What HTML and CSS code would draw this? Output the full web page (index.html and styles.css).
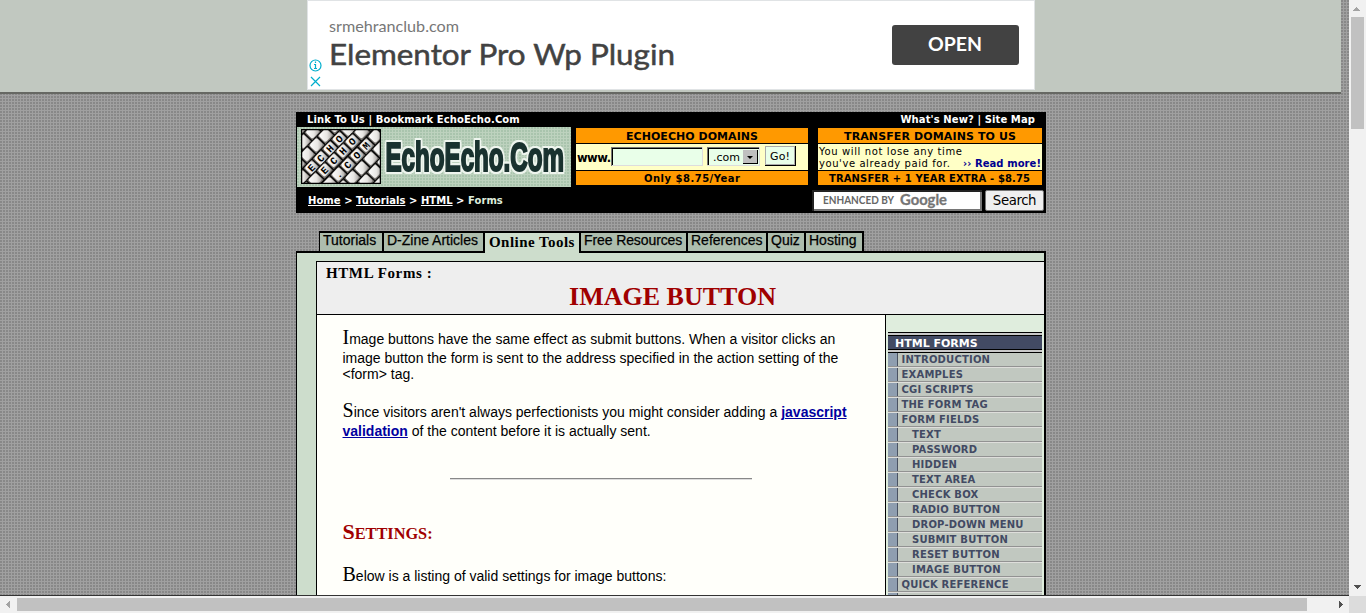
FILE: index.html
```html
<!DOCTYPE html>
<html lang="en">
<head>
<meta charset="utf-8">
<title>HTML Forms : Image Button</title>
<link rel="stylesheet" href="styles.css">
</head>
<body>
<div class="window">
<div class="page">
  <div class="adband">
    <svg class="ad" width="728" height="90" viewBox="0 0 728 90">
      <rect x=".5" y=".5" width="727" height="89" fill="#fff" stroke="#e0e3e5"/>
      <text class="adfont" x="22" y="32" font-size="15" fill="#777" textLength="130" lengthAdjust="spacingAndGlyphs">srmehranclub.com</text>
      <text class="adfont" x="22" y="65" font-size="29.500" fill="#424242" stroke="#424242" stroke-width=".5" textLength="346" lengthAdjust="spacingAndGlyphs">Elementor Pro Wp Plugin</text>
      <rect x="585" y="25" width="127" height="40" rx="3" fill="#424242"/>
      <text class="adfont" x="621" y="51" font-size="19.500" font-weight="700" fill="#fff" textLength="54" lengthAdjust="spacingAndGlyphs">OPEN</text>
      <g fill="none" stroke="#00aecd" stroke-width="1.2">
        <circle cx="8.5" cy="65.500" r="5.500"/>
        <path d="M7 64.500h1.500v4M7 68.500h3M8.500 61.500v1.500M4 77l9 9M13 77l-9 9"/>
      </g>
    </svg>
  </div>

  <div class="header">
    <div class="toplinks"><span class="tl">Link To Us | Bookmark EchoEcho.Com</span><span class="tr">What's New? | Site Map</span></div>
    <div class="banners">
      <svg class="logo" width="274" height="60" viewBox="0 0 274 60">
        <defs>
          <pattern id="mesh" width="3" height="3" patternUnits="userSpaceOnUse"><rect width="3" height="3" fill="#bdd2be"/><rect width="2" height="2" fill="#a9c4ad"/></pattern>
          <linearGradient id="tileFill" x1="0" y1="0" x2="1" y2="1"><stop offset="0" stop-color="#fff"/><stop offset=".6" stop-color="#e8e6e3"/><stop offset="1" stop-color="#a5a19f"/></linearGradient>
          <clipPath id="box"><rect width="80" height="55"/></clipPath>
          <g id="tile"><rect x="-6.500" y="-6.200" width="13" height="12.400" rx="1" fill="#77736f" stroke="#080808" stroke-width="1"/><rect x="-5" y="-5.300" width="10.400" height="9.800" rx="2" fill="url(#tileFill)"/></g>
          <g id="row"><use href="#tile" x="-66.500"/><use href="#tile" x="-53.200"/><use href="#tile" x="-39.900"/><use href="#tile" x="-26.600"/><use href="#tile" x="-13.300"/><use href="#tile"/><use href="#tile" x="13.300"/><use href="#tile" x="26.600"/><use href="#tile" x="39.900"/><use href="#tile" x="53.200"/><use href="#tile" x="66.500"/></g>
        </defs>
        <rect width="274" height="60" fill="url(#mesh)"/>
        <g transform="translate(4 2)" clip-path="url(#box)">
          <rect width="80" height="55" fill="#222"/>
          <g><use href="#row" transform="translate(-30 29) rotate(-46)"/><use href="#row" transform="translate(-16 32) rotate(-46)"/><use href="#row" transform="translate(-3 35.500) rotate(-46)"/><use href="#row" transform="translate(10.700 39) rotate(-46)"/><use href="#row" transform="translate(23.700 41.500) rotate(-46)"/><use href="#row" transform="translate(37.600 45.700) rotate(-46)"/><use href="#row" transform="translate(51.500 49) rotate(-46)"/><use href="#row" transform="translate(65 52.500) rotate(-46)"/><use href="#row" transform="translate(79 56) rotate(-46)"/></g>
          <g class="tiletext">
            <g transform="translate(10.700 39) rotate(-46)"><text x="0" y="3">E</text><text x="13.300" y="3">C</text><text x="26.600" y="3">H</text><text x="39.900" y="3">O</text></g>
            <g transform="translate(23.700 41.500) rotate(-46)"><text x="0" y="3">E</text><text x="13.300" y="3">C</text><text x="26.600" y="3">H</text><text x="39.900" y="3">O</text></g>
            <g transform="translate(37.600 45.700) rotate(-46)"><text x="0" y="3">.</text><text x="13.300" y="3">C</text><text x="26.600" y="3">O</text><text x="39.900" y="3">M</text></g>
          </g>
          <rect x=".5" y=".5" width="79" height="54" fill="none" stroke="#000" stroke-width="1.500"/>
        </g>
        <g class="wordmark" transform="translate(88.500 44) scale(.604 1)"><text>EchoEcho.Com</text></g>
      </svg>
      <svg class="domains" width="232" height="57" viewBox="0 0 232 57">
        <rect width="232" height="57" fill="#000"/>
        <path d="M0 0h232v15H0zM0 43h232v14H0z" fill="#ff9900"/><path d="M0 16h232v26H0z" fill="#ffffc6"/>
        <g class="vb"><text x="50" y="12" font-size="11" textLength="132">ECHOECHO DOMAINS</text><text x="68" y="54" font-size="10" textLength="96">Only $8.75/Year</text><text x="1" y="34" font-size="11.500" textLength="34">www.</text></g>
        <rect x="35" y="19" width="92" height="19" fill="#ddd"/><path d="M35 38V19h91v1H36v18z" fill="#777"/><rect x="36" y="20" width="90" height="17" fill="#000"/><rect x="37" y="21" width="89" height="16" fill="#e9ffe9"/>
        <rect x="131" y="19" width="53" height="19" fill="#ddd"/><path d="M131 37V19h52v18z" fill="#777"/><rect x="132" y="20" width="51" height="17"/><rect x="133" y="21" width="50" height="16" fill="#e9ffe9"/>
        <rect x="167" y="22" width="15" height="14" fill="#000"/><rect x="167" y="22" width="14" height="13" fill="#c0c0c0"/><path d="M171 28h6l-3 3z"/>
        <rect x="189" y="18" width="31" height="20"/><rect x="189" y="18" width="30" height="19" fill="#aaa"/><rect x="190" y="19" width="28" height="17" fill="#e9ffe9"/>
        <g class="v"><text x="137" y="33" font-size="11" textLength="27">.com</text><text x="194" y="32" font-size="11" textLength="20">Go!</text></g>
      </svg>
      <svg class="transfer" width="224" height="57" viewBox="0 0 224 57">
        <rect width="224" height="57" fill="#000"/>
        <path d="M0 0h224v15H0zM0 43h224v14H0z" fill="#ff9900"/><path d="M0 16h224v26H0z" fill="#ffffc6"/>
        <g class="vb"><text x="26" y="12" font-size="11" textLength="172">TRANSFER DOMAINS TO US</text><text x="11" y="54" font-size="10" textLength="201">TRANSFER + 1 YEAR EXTRA - $8.75</text><text x="145" y="39" font-size="10" textLength="78" fill="#000090">›› Read more!</text></g>
        <g class="v"><text x="1" y="27" font-size="10" textLength="143">You will not lose any time</text><text x="1" y="39" font-size="10" textLength="131">you've already paid for.</text></g>
      </svg>
    </div>
    <div class="crumbrow">
      <div class="crumbs"><u>Home</u> &gt; <u>Tutorials</u> &gt; <u>HTML</u> &gt; <span class="here">Forms</span></div>
      <div class="search">
        <svg class="field" width="170" height="21" viewBox="0 0 170 21"><rect width="170" height="21" fill="#767676"/><path d="M0 21V0h170v2H2v19z" fill="#222"/><rect x="2" y="2" width="166" height="17" fill="#fff"/><text class="adfont" x="11" y="14" font-size="10.500" fill="#666" textLength="71" lengthAdjust="spacingAndGlyphs">ENHANCED BY</text><text class="adfont" x="88" y="15" font-size="15.500" fill="#757575" stroke="#757575" stroke-width=".3" textLength="47" lengthAdjust="spacingAndGlyphs">Google</text></svg>
        <button class="go">Search</button>
      </div>
    </div>
  </div>

  <div class="tabs">
    <span class="tab t1">Tutorials</span><span class="tab t2">D-Zine Articles</span><span class="tab active">Online Tools</span><span class="tab t4">Free Resources</span><span class="tab t5">References</span><span class="tab t6">Quiz</span><span class="tab t7">Hosting</span>
  </div>

  <div class="main">
    <div class="sheet">
      <div class="title"><div class="section">HTML Forms :</div><h1>IMAGE BUTTON</h1></div>
      <div class="columns">
        <div class="content">
          <p class="p1"><span class="line first"><b class="cap">I</b>mage buttons have the same effect as submit buttons. When a visitor clicks an</span><span class="line">image button the form is sent to the address specified in the action setting of the</span><span class="line">&lt;form&gt; tag.</span></p>
          <p class="p2"><span class="line first"><b class="cap">S</b>ince visitors aren't always perfectionists you might consider adding a <a>javascript</a></span><span class="line"><a>validation</a> of the content before it is actually sent.</span></p>
          <hr>
          <h2>S<small>ETTINGS:</small></h2>
          <p class="p3"><span class="line"><b class="cap">B</b>elow is a listing of valid settings for image buttons:</span></p>
        </div>
        <div class="side">
          <div class="menuhead"><div>HTML FORMS</div></div>
          <ul class="menu">
            <li>INTRODUCTION</li><li>EXAMPLES</li><li>CGI SCRIPTS</li><li>THE FORM TAG</li><li>FORM FIELDS</li>
            <li class="sub">TEXT</li><li class="sub">PASSWORD</li><li class="sub">HIDDEN</li><li class="sub">TEXT AREA</li><li class="sub">CHECK BOX</li><li class="sub">RADIO BUTTON</li><li class="sub">DROP-DOWN MENU</li><li class="sub">SUBMIT BUTTON</li><li class="sub">RESET BUTTON</li><li class="sub">IMAGE BUTTON</li>
            <li>QUICK REFERENCE</li><li></li>
          </ul>
        </div>
      </div>
    </div>
  </div>
</div>
<div class="vbar"><svg width="17" height="596"><path d="M4 11h7v-1h-1v-1h-1v-1h-1v-1h-1v1h-1v1h-1v1h-1z" fill="#a3a3a3"/><rect x="2" y="17" width="13" height="112" fill="#c1c1c1"/><path d="M5 585h7v1h-1v1h-1v1h-1v1h-1v-1h-1v-1h-1v-1h-1z" fill="#505050"/></svg></div>
<div class="hbar"><svg width="1349" height="17"><path d="M10 5v7h-1v-1h-1v-1h-1v-1h-1v-1h1v-1h1v-1h1v-1z" fill="#a3a3a3"/><rect x="17" y="2" width="1290" height="13" fill="#c1c1c1"/><path d="M1339 5v7h1v-1h1v-1h1v-1h1v-1h-1v-1h-1v-1h-1v-1z" fill="#505050"/></svg></div>
<div class="corner"></div>
</div>
</body>
</html>
```
FILE: styles.css
```css
* { box-sizing: border-box; }
body { margin: 0; overflow: hidden; }
svg { display: block; }
.window { display: grid; grid-template-columns: 1349px 17px; grid-template-rows: 596px 17px; width: 1366px; height: 613px; }
.page {
  overflow: hidden; height: 596px; border-bottom: 1px solid #333;
  background-color: #888;
  background-image: linear-gradient(90deg, #a0a0a0 1px, transparent 1px), linear-gradient(#a0a0a0 1px, transparent 1px);
  background-size: 3px 3px; background-position: 2px 2px;
}
.vbar, .hbar { background: #f1f1f1; }
.corner { background: #dcdcdc; }
.adband { width: 1341px; height: 94px; background: #c1c8c0; border-bottom: 2px solid #666863; }
.ad { margin-left: 307px; }
.adfont { font-family: Lato, sans-serif; }
.v text { font-family: "DejaVu Sans", sans-serif; font-weight: 400; }
.vb text { font-family: "DejaVu Sans", sans-serif; font-weight: 700; }
.header { width: 750px; height: 101px; margin: 18px 0 0 296px; background: #000; color: #fff; font: 700 10px/15px "DejaVu Sans", sans-serif; }
.toplinks { display: flex; justify-content: space-between; height: 15px; padding: 0 11px; letter-spacing: .09px; }
.banners { display: flex; padding-left: 1px; height: 60px; align-items: flex-start; }
.domains { margin: 1px 0 0 5px; }
.transfer { margin: 1px 0 0 10px; }
.tiletext text { font: 700 10px "Liberation Mono", monospace; text-anchor: middle; }
.wordmark text {
  font: 700 40px "Liberation Sans", sans-serif; fill: #19322f; stroke: #19322f; stroke-width: 2.2px;
  filter: drop-shadow(2px 0 #eef5ee) drop-shadow(-2px 0 #eef5ee) drop-shadow(0 2px #eef5ee) drop-shadow(0 -2px #eef5ee);
}
.crumbrow { display: flex; justify-content: space-between; height: 26px; padding: 3px 2px 0 12px; }
.crumbs { padding-top: 3px; letter-spacing: .04px; }
.here { color: #dfeddd; }
.search { display: flex; gap: 3px; }
.go { width: 59px; height: 21px; padding: 0; border: 1px solid #767676; border-radius: 2px; background: #efefef; font: 13.3px "DejaVu Sans", sans-serif; color: #000; letter-spacing: -.4px; }
.tabs { display: flex; margin: 18px 0 0 319px; height: 20px; }
.tab { height: 20px; padding-left: 3px; border: solid #000; border-width: 2px 2px 0 0; background: #adbdad; font: 14px/14px "Liberation Sans", sans-serif; white-space: nowrap; -webkit-text-stroke: .25px #000; }
.t1 { width: 65px; border-left-width: 1px; }
.t2 { width: 101px; }
.active { width: 96px; height: 22px; padding-left: 4px; background: #cdddcc; font: 700 15px/19px "Liberation Serif", serif; letter-spacing: .45px; position: relative; -webkit-text-stroke: 0; }
.t4 { width: 107px; letter-spacing: -.1px; }
.t5 { width: 80px; }
.t6 { width: 38px; }
.t7 { width: 58px; }
.main { width: 750px; height: 400px; margin-left: 296px; padding: 8px 0 0 19px; border: solid #000; border-width: 2px 2px 0 1px; background: #cdddcc; }
.sheet { height: 400px; border: solid #000; border-width: 1px 0 0 1px; }
.title { height: 53px; background: #eee; border-bottom: 1px solid #000; padding-left: 9px; font-family: "Liberation Serif", serif; }
.section { font-size: 15px; font-weight: 700; line-height: 22px; letter-spacing: .6px; }
h1 { margin: 0 25px 0 0; text-align: center; color: #a00000; font-size: 26px; line-height: 26px; }
.columns { display: flex; height: 346px; }
.content { width: 569px; padding: 13px 0 0 25.5px; background: #fffffa; border-right: 1px solid #000; font: 14px/16px "Liberation Sans", sans-serif; }
p { margin: 0; }
.line { display: block; white-space: nowrap; height: 19px; line-height: 19px; }
.first { height: 21px; }
.p1 .line:nth-child(3) { height: 14px; line-height: 12px; }
.cap { font: 20px/19px "Liberation Serif", serif; }
.p2 { margin-top: 19px; }
a { color: #0000a0; font-weight: 700; text-decoration: underline; }
hr { width: 302px; margin: 37px 0 0 107.5px; border: 0; height: 2px; border-top: 1px solid #888; border-bottom: 1px solid #ddd; }
h2 { margin: 39px 0 0; color: #a00000; font: 700 22px/26px "Liberation Serif", serif; }
h2 small { font-size: 16.3px; }
.p3 { margin-top: 18px; }
.side { width: 158px; padding: 17px 2px 0; background: #dfeddd; font: 700 10px/12px "DejaVu Sans", sans-serif; }
.menuhead { height: 21px; padding: 2px 0; border: solid #000; border-width: 1px 0; background: #c8c8c8; }
.menuhead div { height: 15px; padding-left: 7px; background: #424a63; border: solid #000; border-width: 1px 0; color: #fff; font-size: 11px; line-height: 15px; }
.menu { list-style: none; margin: -1px 0 0; padding: 0; }
li { height: 15px; padding-left: 13.5px; border-top: 1px solid #dededb; border-bottom: 1px solid #929292; background: linear-gradient(90deg, #8f9eb0 9px, #4a5262 9px, #4a5262 10px, #c1c8c0 10px); color: #424a63; line-height: 13px; letter-spacing: .2px; white-space: nowrap; }
li:first-child { border-top-color: #000; }
.sub { padding-left: 24px; }
```
